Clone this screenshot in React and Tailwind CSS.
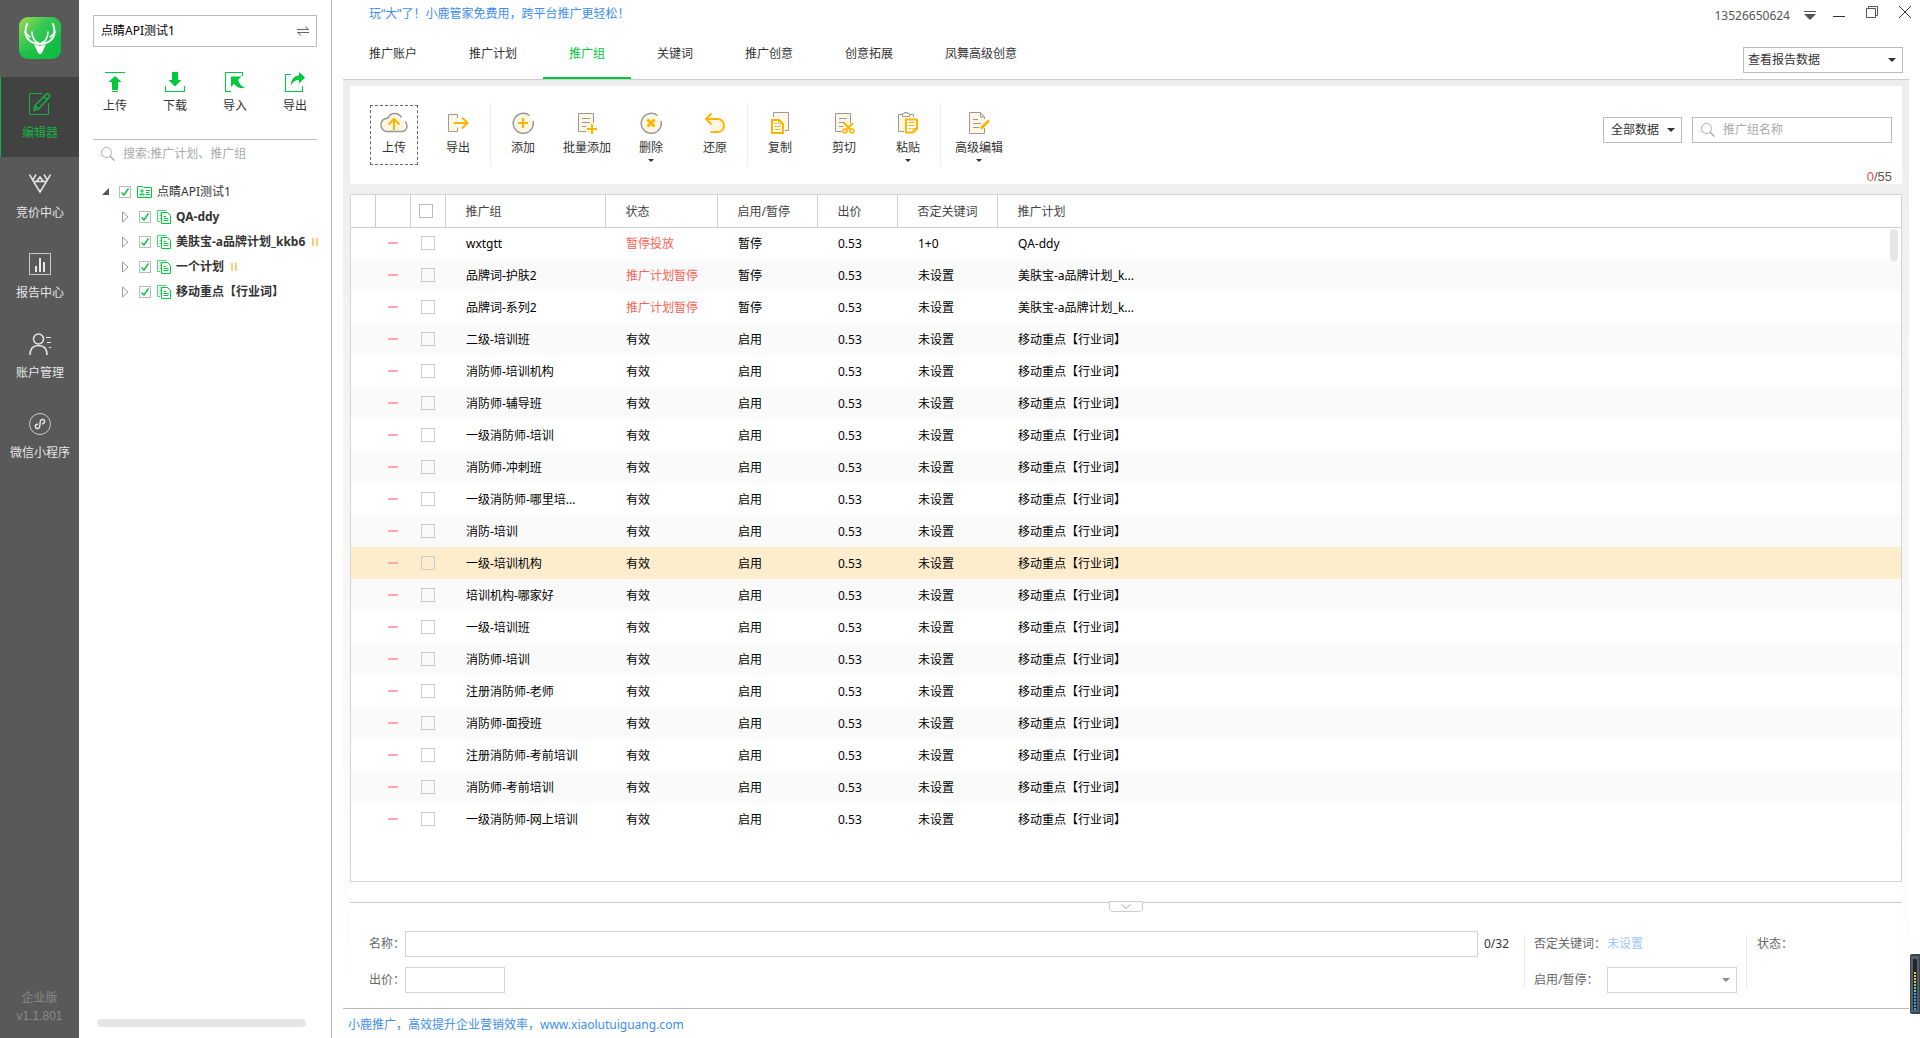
import React, { useState } from 'react';

const GREEN = '#00c93c';
const ORANGE = '#ffb400';
const CREAM = '#fdf6e3';
const GRAY = '#999999';

const navItems = [
  { id: 'editor', label: '编辑器' },
  { id: 'bid', label: '竞价中心' },
  { id: 'report', label: '报告中心' },
  { id: 'account', label: '账户管理' },
  { id: 'wechat', label: '微信小程序' },
];

const campaigns = [
  { name: 'QA-ddy', paused: false },
  { name: '美肤宝-a品牌计划_kkb6', paused: true },
  { name: '一个计划', paused: true },
  { name: '移动重点【行业词】', paused: false },
];

const tabs = ['推广账户', '推广计划', '推广组', '关键词', '推广创意', '创意拓展', '凤舞高级创意'];

const toolGroups = [
  [{ id: 'upload', label: '上传' }, { id: 'export', label: '导出' }],
  [
    { id: 'add', label: '添加' },
    { id: 'batch', label: '批量添加' },
    { id: 'remove', label: '删除', menu: true },
    { id: 'undo', label: '还原' },
  ],
  [
    { id: 'copy', label: '复制' },
    { id: 'cut', label: '剪切' },
    { id: 'paste', label: '粘贴', menu: true },
  ],
  [{ id: 'advanced', label: '高级编辑', menu: true }],
];

const active = (name) => ({
  name,
  status: '有效',
  enabled: '启用',
  bid: '0.53',
  negative: '未设置',
  plan: '移动重点【行业词】',
});

const rows = [
  { name: 'wxtgtt', status: '暂停投放', enabled: '暂停', bid: '0.53', negative: '1+0', plan: 'QA-ddy' },
  { name: '品牌词-护肤2', status: '推广计划暂停', enabled: '暂停', bid: '0.53', negative: '未设置', plan: '美肤宝-a品牌计划_k...' },
  { name: '品牌词-系列2', status: '推广计划暂停', enabled: '暂停', bid: '0.53', negative: '未设置', plan: '美肤宝-a品牌计划_k...' },
  active('二级-培训班'),
  active('消防师-培训机构'),
  active('消防师-辅导班'),
  active('一级消防师-培训'),
  active('消防师-冲刺班'),
  active('一级消防师-哪里培...'),
  active('消防-培训'),
  active('一级-培训机构'),
  active('培训机构-哪家好'),
  active('一级-培训班'),
  active('消防师-培训'),
  active('注册消防师-老师'),
  active('消防师-面授班'),
  active('注册消防师-考前培训'),
  active('消防师-考前培训'),
  active('一级消防师-网上培训'),
];

const Logo = () => (
  <svg width="42" height="42" viewBox="0 0 42 42" fill="none">
    <defs>
      <linearGradient id="logoBg" x1="0" y1="0" x2="1" y2="1">
        <stop offset="0" stopColor="#9bdc50" />
        <stop offset="0.4" stopColor="#35c653" />
        <stop offset="1" stopColor="#0cbc44" />
      </linearGradient>
    </defs>
    <rect width="42" height="42" rx="9" fill="url(#logoBg)" />
    <path d="M0 34c13 1 29-4 42-20v19a9 9 0 0 1-9 9H9a9 9 0 0 1-9-8z" fill="#08b83c" opacity="0.4" />
    <g stroke="#fff" strokeWidth="2" strokeLinecap="round">
      <path d="M8 7C4 18 8 26 21 27C34 26 38 18 34 7" />
      <path d="M6 15c2 3 3 4 5 5M36 15c-2 3-3 4-5 5" strokeWidth="1.5" />
      <path d="M13 15c0 6 3 10 8 12c5-2 8-6 8-12" strokeWidth="1.5" />
    </g>
    <path d="M15 27l6 2 6-2-4 9q-2 2-4 0z" fill="#fff" />
  </svg>
);

const NavIcon = ({ id }) => {
  const common = { width: 22, height: 22, viewBox: '0 0 22 22', fill: 'none', stroke: 'currentColor' };
  switch (id) {
    case 'editor':
      return (
        <svg {...common}>
          <path d="M13 .5H.5v21h19V10" />
          <path d="M5 17.5l1-5L17 1.500q1.500-1.500 3 0t0 3L9.500 16z M6 12.500L9.500 16M15 3.500l3 3" strokeWidth="1.500" />
        </svg>
      );
    case 'bid':
      return (
        <svg {...common} strokeWidth="1.500">
          <path d="M4.500 8.500h13L11 19zM.5 1.500l4 7M21.500 1.500l-4 7M7 1.500L4 6.500M15 1.500l3 5M4.500 8.500H7.500L11 4L14.500 8.500" />
        </svg>
      );
    case 'report':
      return (
        <svg {...common}>
          <path d="M.5 .5h21v21H.5z" opacity="0.8" />
          <path d="M7 13v6M11 5v14M15 9v10" strokeWidth="2" />
        </svg>
      );
    case 'account':
      return (
        <svg {...common} strokeWidth="1.500">
          <circle cx="9.500" cy="6" r="5" />
          <path d="M1 22c0-6 3-9.500 8.500-9.500S18 16 18 22" />
          <path d="M17 4.500h5M18 9.500h4M20 14.500h2" strokeWidth="1" />
        </svg>
      );
    default:
      return (
        <svg {...common}>
          <circle cx="11" cy="11" r="10.500" opacity="0.8" />
          <path d="M9 11c-4 1-3 5 0 4.500 2-.500 2-2 2-4.500s0-4 2-4.500c3-.500 4 3.500 0 4.500" strokeWidth="1.500" />
        </svg>
      );
  }
};

const ActionIcon = ({ id }) => (
  <svg width="20" height="20" viewBox="0 0 20 20" fill={GREEN}>
    {id === '上传' && <path d="M0 0h20v1H0zM10 4l6.500 6H13v8H7v-8H3.500zM7 19h6v1H7z" />}
    {id === '下载' && <path d="M7 0h6v8h3.500L10 14.500 3.500 8H7zM0 14h1v5h18v-5h1v6H0z" />}
    {id === '导入' && (
      <path d="M0 0h18v4h-1V1H1v18h5v1H0zM6 4.500h10.500l-3.300 3.300C14 11 16 14.500 20 15.500c-5 2-9.500-1-10.800-3.700L6 15z" />
    )}
    {id === '导出' && (
      <path d="M0 2h6v1H1v16h16v-5h1v6H0zM14 0l6 5.500-6 6V8c-4 0-6 2-8 5.500C6 8 9 3.500 14 3.500z" />
    )}
  </svg>
);

const ToolIcon = ({ id }) => {
  const common = { height: 22, viewBox: '0 0 22 22', fill: 'none', stroke: GRAY };
  switch (id) {
    case 'upload':
      return (
        <svg {...common} width="28" viewBox="0 0 28 22">
          <path d="M21 8C20 4 18 1.500 14.500 1.500S9 3.500 8 6C3 6.500 1 9.500 1 13s2.500 6.500 6 6.500h14.500c3.500 0 5.500-2.500 5.500-5.500q0-4-3.500-5.500z" fill={CREAM} stroke="none" />
          <path d="M21.500 5.500C20 3 18 1.500 14.500 1.500S9 3.500 8 6C3 6.500 1 9.500 1 13s2.500 6.500 6 6.500h14.500c3.500 0 5.500-2.500 5.500-5.500q0-3-2-4.500" strokeWidth="1.500" />
          <path d="M14 18V7.500M8.500 12.500L14 7l5.500 5.500" stroke={ORANGE} strokeWidth="2" />
        </svg>
      );
    case 'export':
      return (
        <svg {...common} width="22">
          <path d="M2 3h9v16H2z" fill={CREAM} stroke="none" />
          <path d="M10.500 2.500h-9v17h9v-4M10.500 2.500V6" />
          <path d="M7 11h13M15 5.500l5.500 5.500-5.500 5.500" stroke={ORANGE} strokeWidth="2" />
        </svg>
      );
    case 'add':
    case 'remove':
      return (
        <svg {...common} width="22">
          <circle cx="11" cy="11" r="9" fill={CREAM} stroke="none" />
          <path d="M17.500 3.500A10 10 0 1 0 21 9" strokeWidth="1.500" />
          {id === 'add' ? (
            <path d="M11 6v10M6 11h10" stroke={ORANGE} strokeWidth="2" />
          ) : (
            <path d="M7.500 7.500l7 7M14.500 7.500l-7 7" stroke={ORANGE} strokeWidth="3" />
          )}
        </svg>
      );
    case 'batch':
      return (
        <svg {...common} width="22">
          <path d="M2.500 1.500h15v19h-15z" fill={CREAM} stroke="none" />
          <path d="M10 19.500H2.500v-18h15V11M6 6.500h8M6 10.500h8M6 14.500h4" />
          <path d="M16 12v10M11 17h10" stroke={ORANGE} strokeWidth="2" />
        </svg>
      );
    case 'undo':
      return (
        <svg {...common} width="22">
          <path d="M5 7h9q6 1 6 6t-6 7H8z" fill={CREAM} stroke="none" />
          <path d="M7.500 1.500L2 7l5.500 5.500M2 7h11c4 0 7 2.500 7 6.500s-3 6.500-7 6.500H6.500" stroke={ORANGE} strokeWidth="2" />
        </svg>
      );
    case 'copy':
      return (
        <svg {...common} width="22">
          <path d="M4 1.500h15.500v18H15V7H4z" fill={CREAM} stroke="none" />
          <path d="M4.500 5V.5h15v18H16" />
          <path d="M3 8h7l4 4v9H3z" fill="#fff" stroke={ORANGE} strokeWidth="2" />
          <path d="M9.500 8v4H14M5.500 11.500H8M5.500 14.500h6M5.500 17.500h6" stroke={ORANGE} />
        </svg>
      );
    case 'cut':
      return (
        <svg {...common} width="22">
          <path d="M2.500 1.500h15v18h-15z" fill={CREAM} stroke="none" />
          <path d="M9 19.500H2.500v-18h15V11M6 6.500h8M6 10.500h6M6 14.500h4" />
          <path d="M11 11l7 7M20 11l-7 7" stroke={ORANGE} strokeWidth="2" />
          <circle cx="12" cy="19" r="2" stroke={ORANGE} strokeWidth="1.500" />
          <circle cx="19" cy="19" r="2" stroke={ORANGE} strokeWidth="1.500" />
        </svg>
      );
    case 'paste':
      return (
        <svg {...common} width="22">
          <path d="M1.500 3.500h15v16h-15z" fill={CREAM} stroke="none" />
          <path d="M7 19.500H1.500v-17h4M12 2.500h4.500V5M5.500 1.500h2v-1h3v1h2v3h-7z" />
          <path d="M9 7.500h11v9l-4 4H9z" fill="#fff" stroke={ORANGE} strokeWidth="2" />
          <path d="M11.500 10.500h6M11.500 13.500h6M11.500 16.500h3M16 20v-3.500h4" stroke={ORANGE} />
        </svg>
      );
    default:
      return (
        <svg {...common} width="22">
          <path d="M1.500 .5h11l4 4v17h-15z" fill={CREAM} stroke="none" />
          <path d="M16.500 7V5l-4-4.500h-11v21h15V16M12.500 .5V5h4M5 7.500h5M5 11.500h8M5 15.500h6" />
          <path d="M13 16.500L21 8.500" stroke={ORANGE} strokeWidth="3" />
        </svg>
      );
  }
};

const SearchIcon = () => (
  <svg width="14" height="14" viewBox="0 0 14 14" fill="none" stroke="#aaa" className="shrink-0">
    <circle cx="5.500" cy="5.500" r="5" />
    <path d="M9 9l4.500 4.500" strokeWidth="1.500" />
  </svg>
);

const Caret = ({ className }) => (
  <svg width="8" height="4" viewBox="0 0 8 4" fill="currentColor" className={className}>
    <path d="M0 0h8L4 4z" />
  </svg>
);

const Select = ({ label, options, className, id, caret = 'text-[#333]' }) => (
  <div className={`grid h-[26px] items-center border bg-white ${className}`}>
    <select
      id={id}
      aria-label={label}
      className="col-start-1 row-start-1 h-full w-full appearance-none bg-transparent text-[#333] outline-none"
    >
      {options.map((option) => (
        <option key={option}>{option}</option>
      ))}
    </select>
    <Caret className={`pointer-events-none col-start-1 row-start-1 mr-[6px] justify-self-end ${caret}`} />
  </div>
);

const TreeCheckbox = ({ label }) => (
  <span className="grid size-3 shrink-0 place-items-center">
    <input
      type="checkbox"
      defaultChecked
      aria-label={label}
      className="peer col-start-1 row-start-1 size-3 appearance-none border border-[#bbb] bg-white"
    />
    <svg
      width="8"
      height="8"
      viewBox="0 0 8 8"
      fill="none"
      stroke={GREEN}
      strokeWidth="1.500"
      className="pointer-events-none invisible col-start-1 row-start-1 peer-checked:visible"
    >
      <path d="M.5 4.500L3 7l4.500-6.500" />
    </svg>
  </span>
);

const Sidebar = () => (
  <nav className="flex w-[79px] shrink-0 flex-col bg-[#595959] text-[#e6e6e6]">
    <div className="flex h-[77px] justify-center pt-[17px]">
      <Logo />
    </div>
    {navItems.map((item) => (
      <button
        key={item.id}
        className={`flex h-20 flex-col items-center gap-[10px] border-l pt-4 ${
          item.id === 'editor' ? 'border-[#14b340] bg-[#424242] text-[#14b340]' : 'border-transparent'
        }`}
      >
        <NavIcon id={item.id} />
        <span>{item.label}</span>
      </button>
    ))}
    <div className="mt-auto pb-3 text-center leading-[19px] text-[#8a8a8a]">
      <p>企业版</p>
      <p className="font-['Liberation_Sans',sans-serif]">v1.1.801</p>
    </div>
  </nav>
);

const AccountPanel = () => (
  <aside className="flex w-[253px] shrink-0 flex-col border-r border-[#bbb] text-[#333]">
    <button className="mx-[14px] mt-[15px] flex h-8 items-center justify-between border border-[#bbb] px-[7px] text-black">
      <span>点睛API测试1</span>
      <svg width="12" height="10" viewBox="0 0 12 10" fill="none" stroke="#666">
        <path d="M0 3.500h11.500L8 .5M12 6.500H.5L4 9.500" />
      </svg>
    </button>
    <div className="mt-[25px] grid grid-cols-4 px-[6px]">
      {['上传', '下载', '导入', '导出'].map((action) => (
        <button key={action} className="flex flex-col items-center gap-[6px]">
          <ActionIcon id={action} />
          <span>{action}</span>
        </button>
      ))}
    </div>
    <label className="mx-[14px] mt-[25px] flex h-[29px] items-center gap-2 border-t border-[#bbb] pl-2">
      <SearchIcon />
      <input
        aria-label="搜索"
        placeholder="搜索:推广计划、推广组"
        className="w-full outline-none placeholder:text-[#aaa]"
      />
    </label>
    <ul className="mt-[11px] ml-[14px] overflow-hidden pr-[14px]">
      <li className="flex h-[25px] items-center pl-[9px]">
        <svg width="7" height="7" viewBox="0 0 7 7" fill="#555">
          <path d="M7 0v7H0z" />
        </svg>
        <span className="ml-[10px] flex items-center gap-[6px]">
          <TreeCheckbox label="点睛API测试1" />
          <svg width="15" height="12" viewBox="0 0 15 12" fill="none" stroke={GREEN}>
            <path d="M.5 11.500V.5h5l1 1h8v10z" />
            <path d="M4 4h2v2H4zM3 9h4v-1H3zM9 4.500h4M9 6.500h3M9 8.500h4" />
          </svg>
        </span>
        <span className="ml-[5px]">点睛API测试1</span>
      </li>
      {campaigns.map((campaign) => (
        <li key={campaign.name} className="flex h-[25px] items-center pl-[29px] whitespace-nowrap">
          <svg width="7" height="12" viewBox="0 0 7 12" fill="none" stroke="#999" className="shrink-0">
            <path d="M.5 1v10L6 6z" />
          </svg>
          <span className="ml-[10px] flex items-center gap-[6px]">
            <TreeCheckbox label={campaign.name} />
            <svg width="14" height="14" viewBox="0 0 14 14" fill="none" stroke={GREEN} className="shrink-0">
              <path d="M3 11.500H.5V.5h9M2.500 3H4M2.500 5.500H4M2.500 8.500H4" opacity="0.7" />
              <path d="M4.500 13.500v-11h6l3 3v8zM6.500 6.500H9M6.500 8.500h5M6.500 10.500h5" />
            </svg>
          </span>
          <span className="ml-[5px] font-bold">{campaign.name}</span>
          {campaign.paused && (
            <svg width="6" height="8" viewBox="0 0 6 8" fill="#ffca75" className="ml-[7px] shrink-0">
              <path d="M0 0h2v8H0zM4 0h2v8H4z" />
            </svg>
          )}
        </li>
      ))}
    </ul>
    <div className="mt-auto mr-[25px] mb-[11px] ml-[18px] h-2 rounded-full bg-[#e6e6e6]" />
  </aside>
);

const TopBar = () => {
  const [tab, setTab] = useState('推广组');

  return (
    <header className="flex justify-between">
      <div>
        <p className="h-7 pt-[6px] pl-[37px] text-[#3d8df0]">玩“大”了！小鹿管家免费用，跨平台推广更轻松！</p>
        <div className="flex pl-[11px]">
          {tabs.map((name) => (
            <button
              key={name}
              onClick={() => setTab(name)}
              className={`h-[51px] border-b-2 px-[26px] pt-[2px] ${
                tab === name ? 'border-[#00c93c] text-[#00c93c]' : 'border-transparent text-[#333]'
              }`}
            >
              {name}
            </button>
          ))}
        </div>
      </div>
      <div className="flex flex-col items-end pt-[6px]">
        <div className="mr-[9px] flex items-start text-[#555]">
          <span className="pt-[2px]">13526650624</span>
          <button aria-label="菜单" className="mt-[5px] ml-[14px]">
            <svg width="12" height="10" viewBox="0 0 12 10" fill="currentColor">
              <path d="M0 0h12v1H0zM0 3h12L6 9z" />
            </svg>
          </button>
          <button aria-label="最小化" className="mt-[10px] ml-[17px]">
            <svg width="12" height="1" viewBox="0 0 12 1" fill="#333">
              <path d="M0 0h12v1H0z" />
            </svg>
          </button>
          <button aria-label="还原窗口" className="ml-[21px]">
            <svg width="12" height="12" viewBox="0 0 12 12" fill="none" stroke="currentColor">
              <path d="M.5 2.500h9v9h-9zM2.500 2.500v-2h9v9h-2" />
            </svg>
          </button>
          <button aria-label="关闭" className="ml-[21px]">
            <svg width="12" height="12" viewBox="0 0 12 12" fill="none" stroke="#333">
              <path d="M0 0l12 12M12 0L0 12" />
            </svg>
          </button>
        </div>
        <Select label="报告数据" options={['查看报告数据']} className="mt-[23px] mr-[17px] w-40 border-[#bbb] pl-1" />
      </div>
    </header>
  );
};

const Toolbar = () => (
  <section className="flex h-[98px] justify-between bg-white pr-[10px]">
    <div className="flex pt-[17px] pl-3">
      {toolGroups.map((group, i) => (
        <div key={i} className="flex h-16 border-r border-[#eee] last:border-r-0">
          {group.map((tool) => (
            <button
              key={tool.id}
              className={`flex flex-col items-center text-[#333] ${
                tool.id === 'upload'
                  ? 'mx-2 mt-[2px] h-[60px] w-12 border border-dashed border-[#666] pt-[6px]'
                  : tool.id === 'advanced'
                    ? 'w-[76px] pt-[9px]'
                    : 'w-16 pt-[9px]'
              }`}
            >
              <ToolIcon id={tool.id} />
              <span className="mt-[6px]">{tool.label}</span>
              {tool.menu && <Caret className="mt-[3px] h-[3px] w-[6px]" />}
            </button>
          ))}
        </div>
      ))}
    </div>
    <div className="flex flex-col items-end pt-[31px]">
      <div className="flex gap-[10px]">
        <Select label="数据范围" options={['全部数据']} className="w-[79px] border-[#bbb] pl-[7px]" />
        <label className="flex h-[26px] w-[200px] items-center gap-2 border border-[#bbb] pl-2">
          <SearchIcon />
          <input aria-label="推广组名称" placeholder="推广组名称" className="w-full outline-none placeholder:text-[#aaa]" />
        </label>
      </div>
      <p className="mt-[26px] font-['Liberation_Sans',sans-serif] text-[13px] leading-4 text-[#555]">
        <span className="text-[#e0533d]">0</span>/55
      </p>
    </div>
  </section>
);

const GroupTable = () => (
  <section className="relative mt-[10px] flex-1 border border-[#d4d4d4] bg-white pb-[46px]">
    <table className="w-full table-fixed border-collapse text-left">
      <colgroup>
        <col className="w-6" />
        <col className="w-[35px]" />
        <col className="w-[35px]" />
        <col className="w-40" />
        <col className="w-28" />
        <col className="w-[100px]" />
        <col className="w-20" />
        <col className="w-[100px]" />
        <col />
      </colgroup>
      <thead>
        <tr className="h-8 border-b border-[#ccc] text-[#444]">
          <th className="border-r border-[#ccc]" />
          <th className="border-r border-[#ccc]" />
          <th className="border-r border-[#ccc] pl-2">
            <input type="checkbox" aria-label="全选" className="block size-[14px] appearance-none border border-[#bbb]" />
          </th>
          {['推广组', '状态', '启用/暂停', '出价', '否定关键词'].map((title) => (
            <th key={title} className="border-r border-[#ccc] pt-[2px] pl-5 font-normal">
              {title}
            </th>
          ))}
          <th className="pt-[2px] pl-5 font-normal">推广计划</th>
        </tr>
      </thead>
      <tbody className="text-black">
        {rows.map((row, i) => (
          <tr key={row.name} className={`h-8 ${i === 10 ? 'bg-[#fdedcd]' : 'odd:bg-white even:bg-[#fafafa]'}`}>
            <td />
            <td>
              <div className="mx-auto h-[2px] w-[10px] bg-[#ffa8a8]" />
            </td>
            <td className="pl-[11px]">
              <input type="checkbox" aria-label={row.name} className="block size-[14px] appearance-none border border-[#ccc]" />
            </td>
            <td className="truncate pt-[2px] pl-[21px]">{row.name}</td>
            <td className={`pt-[2px] pl-[21px] ${row.status === '有效' ? '' : 'text-[#ff6355]'}`}>{row.status}</td>
            <td className="pt-[2px] pl-[21px]">{row.enabled}</td>
            <td className="pt-[2px] pl-[21px]">{row.bid}</td>
            <td className="pt-[2px] pl-[21px]">{row.negative}</td>
            <td className="pt-[2px] pl-[21px]">{row.plan}</td>
          </tr>
        ))}
      </tbody>
    </table>
    <div className="absolute top-[34px] right-[3px] h-8 w-2 rounded-full bg-[#e6e6e6]" />
  </section>
);

const DetailForm = () => (
  <section className="bg-white pt-5 text-[#666]">
    <div className="flex h-[29px] justify-center border-t border-[#ccc]">
      <button aria-label="收起" className="-mt-[2px] flex h-[11px] w-[34px] items-center justify-center rounded-b-sm border border-[#ccc] bg-white">
        <svg width="10" height="5" viewBox="0 0 10 5" fill="none" stroke="#aaa">
          <path d="M.5 .5L5 4.500 9.500 .5" />
        </svg>
      </button>
    </div>
    <div className="flex pb-[15px]">
      <div className="grid flex-1 grid-cols-[36px_1fr] items-center gap-y-[10px] pl-[19px]">
        <label htmlFor="name">名称：</label>
        <div className="flex items-center gap-[6px]">
          <input id="name" className="h-[26px] flex-1 border border-[#d4d4d4] px-1 outline-none" />
          <span className="w-10 text-[#333]">0/32</span>
        </div>
        <label htmlFor="bid">出价：</label>
        <input id="bid" className="h-[26px] w-[100px] border border-[#d4d4d4] px-1 outline-none" />
      </div>
      <div className="my-1 h-[52px] border-l border-[#e8e8e8]" />
      <div className="grid auto-rows-[26px] grid-cols-[73px_130px] items-center gap-y-[10px] px-[9px]">
        <span>否定关键词：</span>
        <a href="#negative" className="text-[#9cc6fb]">未设置</a>
        <label htmlFor="enabled">启用/暂停：</label>
        <Select id="enabled" options={['']} className="border-[#d4d4d4] pl-1" caret="text-[#888]" />
      </div>
      <div className="my-1 h-[52px] border-l border-[#e8e8e8]" />
      <p className="w-[155px] pt-[5px] pl-[10px]">状态：</p>
    </div>
  </section>
);

const App = () => (
  <div className="flex min-h-screen bg-white font-['Noto_Sans','Noto_Sans_CJK_SC',sans-serif] text-xs leading-4">
    <Sidebar />
    <AccountPanel />
    <div className="flex min-w-0 flex-1 flex-col">
      <TopBar />
      <main className="mx-[11px] flex flex-1 flex-col border-y border-t-[#ccc] border-b-[#bbb] bg-linear-to-b from-[#ededed] to-white px-[7px] pt-[6px]">
        <Toolbar />
        <GroupTable />
        <DetailForm />
      </main>
      <footer className="h-[29px] pt-2 pl-4">
        <a href="#home" className="text-[#3d8df0]">小鹿推广，高效提升企业营销效率，www.xiaolutuiguang.com</a>
      </footer>
    </div>
    {/* docked level meter on the window edge */}
    <div className="absolute right-0 bottom-6">
      <svg width="10" height="60" viewBox="0 0 10 60" fill="none" className="block">
        <path d="M2 0h8v60H2q-2 0-2-2V2q0-2 2-2z" fill="#3b424c" />
        <path d="M1 2h8v56H1z" fill="#56606c" />
        <path d="M3 5h4v51H3z" fill="#20262e" />
        <path d="M5 18v12" stroke="#e8c53a" strokeWidth="2" strokeDasharray="2 1" />
        <path d="M5 30v9" stroke="#6fd08c" strokeWidth="2" strokeDasharray="2 1" />
        <path d="M5 39v17" stroke="#2fa8e8" strokeWidth="2" strokeDasharray="2 1" />
      </svg>
    </div>
  </div>
);

export default App;
